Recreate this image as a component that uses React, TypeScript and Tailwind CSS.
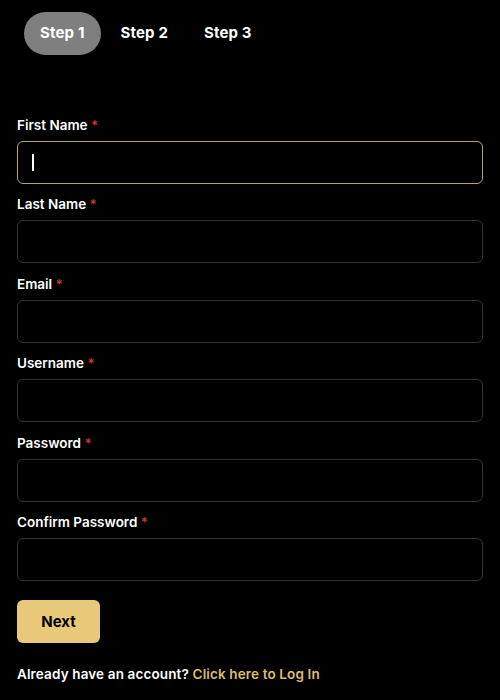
import { useState } from 'react';

const fields = [
  { id: 'firstName', label: 'First Name', type: 'text' },
  { id: 'lastName', label: 'Last Name', type: 'text' },
  { id: 'email', label: 'Email', type: 'email' },
  { id: 'username', label: 'Username', type: 'text' },
  { id: 'password', label: 'Password', type: 'password' },
  { id: 'confirmPassword', label: 'Confirm Password', type: 'password' },
];

export default function App() {
  const [step, setStep] = useState(1);
  const [values, setValues] = useState<Record<string, string>>({});

  return (
    <div
      className="min-h-[700px] bg-black text-white"
      style={{ fontFamily: 'Inter, "Noto Sans", sans-serif' }}
    >
      <div className="flex gap-1 px-6 pt-3">
        {[1, 2, 3].map((n) => (
          <button
            key={n}
            onClick={() => setStep(n)}
            className={`h-[43px] rounded-full px-4 text-[15px] font-bold tracking-[0.01em] ${
              step === n ? 'bg-[#7f7f7f] text-white' : 'text-white'
            }`}
          >
            Step {n}
          </button>
        ))}
      </div>

      <form className="mt-[60px] px-[17px]" onSubmit={(e) => e.preventDefault()}>
        {fields.map((f, i) => (
          <div key={f.id} className="mb-[10.4px]">
            <label
              htmlFor={f.id}
              className="mb-1.5 block text-[13.5px] font-semibold leading-5 text-white"
            >
              {f.label} <span className="text-[#c23b32]">*</span>
            </label>
            <div className="relative">
              <input
                id={f.id}
                type={f.type}
                value={values[f.id] || ''}
                onChange={(e) => setValues({ ...values, [f.id]: e.target.value })}
                className={`h-[43px] w-full rounded-md border bg-black px-[14px] text-sm text-white outline-none ${
                  i === 0 ? 'border-[#b5a468]' : 'border-[#333333] focus:border-[#b5a468]'
                }`}
              />
              {i === 0 && !values[f.id] && (
                <span className="pointer-events-none absolute left-[15px] top-[13px] h-[17px] w-[1.5px] bg-white" />
              )}
            </div>
          </div>
        ))}

        <button
          type="submit"
          className="mt-[9px] h-[43px] w-[83px] rounded-md bg-[#e7c979] text-[15px] font-bold text-black"
        >
          Next
        </button>

        <p className="mt-[21px] text-[13.5px] font-semibold tracking-[0.01em] text-white">
          Already have an account?{' '}
          <a href="#" className="text-[#dcbd6d]">
            Click here to Log In
          </a>
        </p>
      </form>
    </div>
  );
}
